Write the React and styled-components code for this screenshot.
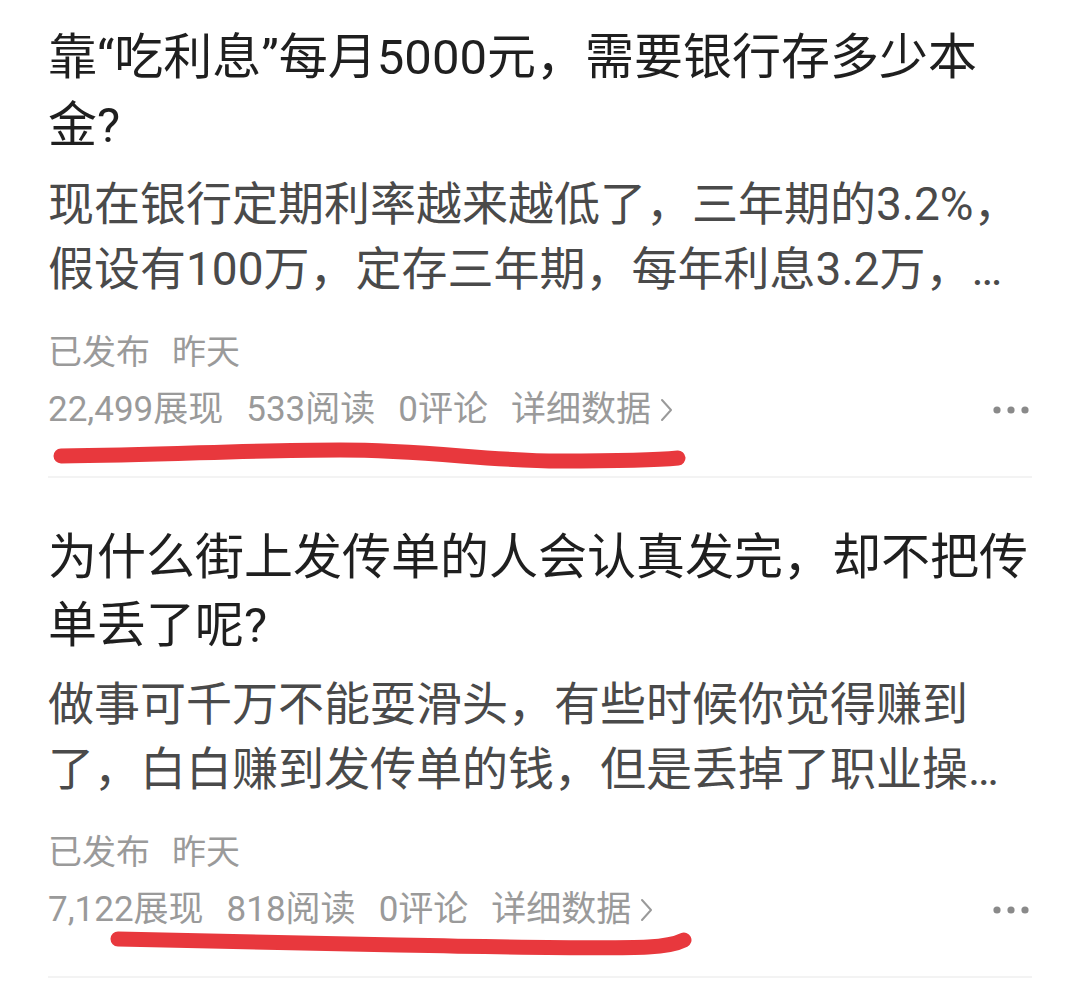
import React from "react";
import styled, { createGlobalStyle } from "styled-components";

const GlobalStyle = createGlobalStyle`
  html, body {
    margin: 0;
    padding: 0;
    background: #fff;
  }
  body {
    font-family: Roboto, "Noto Sans CJK SC", sans-serif;
    -webkit-font-smoothing: antialiased;
  }
`;

const Page = styled.div`
  width: 1079px;
  padding: 0 47px 0 48px;
  box-sizing: border-box;
`;

const Card = styled.div`
  position: relative;
  padding: 46px 0 43px;
  border-bottom: 2px solid #f3f3f3;
  &:first-child {
    padding-top: 24px;
  }
`;

const Title = styled.div`
  font-size: 49px;
  line-height: 68px;
  font-weight: 400;
  color: #1f1f1f;
`;

const Desc = styled.div`
  margin-top: 12px;
  font-size: 46px;
  line-height: 65px;
  color: #4a4a4a;
  display: -webkit-box;
  -webkit-box-orient: vertical;
  -webkit-line-clamp: 2;
  overflow: hidden;
`;

const Meta = styled.div`
  margin-top: 27px;
  display: flex;
  gap: 22px;
  font-size: 34px;
  line-height: 46px;
  color: #9a9a9a;
`;

const StatsRow = styled.div`
  margin-top: 12px;
  display: flex;
  align-items: center;
  justify-content: space-between;
  font-size: 35px;
  line-height: 46px;
  color: #9a9a9a;
`;

const Stats = styled.div`
  display: flex;
  align-items: center;
  gap: 23px;
`;

const Detail = styled.span`
  display: flex;
  align-items: center;
  gap: 6px;
`;

const More = styled.div`
  display: flex;
  align-items: center;
  padding-right: 2px;
`;

const Mark = styled.svg`
  position: absolute;
  left: 0;
  top: ${({ $top }) => $top}px;
  width: 700px;
  height: 40px;
  pointer-events: none;
`;

const Chevron = () => (
  <svg width="18" height="28" viewBox="0 0 18 28" fill="none">
    <path d="M5 4 L14 14 L5 24" stroke="#9a9a9a" strokeWidth="2" strokeLinecap="round" strokeLinejoin="round" />
  </svg>
);

const Dots = () => (
  <svg width="38" height="10" viewBox="0 0 38 10">
    <circle cx="5" cy="5" r="3.6" fill="#8a8a8a" />
    <circle cx="19" cy="5" r="3.6" fill="#8a8a8a" />
    <circle cx="33" cy="5" r="3.6" fill="#8a8a8a" />
  </svg>
);

const posts = [
  {
    title: "靠“吃利息”每月5000元，需要银行存多少本金?",
    desc: "现在银行定期利率越来越低了，三年期的3.2%，假设有100万，定存三年期，每年利息3.2万，…",
    views: "22,499",
    reads: "533",
    comments: "0",
    mark: {
      top: 440,
      d: "M13 16 C 120 15, 200 10, 292 10 C 380 10, 440 21, 512 21 C 570 21, 610 20, 630 18",
    },
  },
  {
    title: "为什么街上发传单的人会认真发完，却不把传单丢了呢?",
    desc: "做事可千万不能耍滑头，有些时候你觉得赚到了，白白赚到发传单的钱，但是丢掉了职业操…",
    views: "7,122",
    reads: "818",
    comments: "0",
    mark: {
      top: 445,
      d: "M70 16 C 150 18, 250 20, 350 22 C 450 24, 560 26, 600 24 C 620 23, 630 20, 636 17",
    },
  },
];

const App = () => {
  return (
    <>
      <GlobalStyle />
      <Page>
        {posts.map((post) => (
          <Card key={post.title}>
            <Title>{post.title}</Title>
            <Desc>{post.desc}</Desc>
            <Meta>
              <span>已发布</span>
              <span>昨天</span>
            </Meta>
            <StatsRow>
              <Stats>
                <span>{post.views}展现</span>
                <span>{post.reads}阅读</span>
                <span>{post.comments}评论</span>
                <Detail>
                  详细数据
                  <Chevron />
                </Detail>
              </Stats>
              <More>
                <Dots />
              </More>
            </StatsRow>
            <Mark $top={post.mark.top} viewBox="0 0 700 40">
              <path d={post.mark.d} stroke="#e8383d" strokeWidth="15" strokeLinecap="round" fill="none" />
            </Mark>
          </Card>
        ))}
      </Page>
    </>
  );
};

export default App;
